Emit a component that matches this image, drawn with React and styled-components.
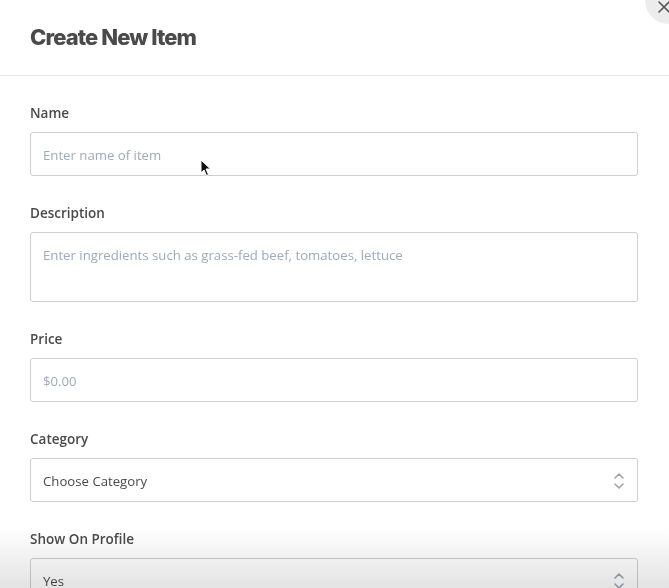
import styled, { createGlobalStyle } from "styled-components";

const Global = createGlobalStyle`
  html, body {
    margin: 0;
    padding: 0;
    background: #fff;
    overflow: hidden;
  }
  * { box-sizing: border-box; }
`;

const Modal = styled.div`
  position: relative;
  width: 669px;
  height: 588px;
  overflow: hidden;
  background: #fff;
  font-family: "Open Sans", "Liberation Sans", sans-serif;
  color: #4a4a4a;
`;

const Header = styled.div`
  height: 76px;
  padding: 0 30px 2px;
  display: flex;
  align-items: center;
  border-bottom: 1px solid #e9e9e9;
`;

const Title = styled.h1`
  margin: 0;
  font-family: Inter, "Liberation Sans", sans-serif;
  font-size: 22px;
  font-weight: 800;
  letter-spacing: -0.9px;
  color: #4a4a4a;
`;

const Close = styled.button`
  position: absolute;
  top: -24px;
  right: -24px;
  width: 48px;
  height: 48px;
  border: none;
  border-radius: 50%;
  background: #ececec;
  padding: 0;
  display: flex;
  align-items: flex-end;
  justify-content: flex-start;
  svg {
    margin: 0 0 11px 13px;
  }
`;

const Form = styled.form`
  padding: 27px 31px 0 30px;
  display: flex;
  flex-direction: column;
`;

const Field = styled.div`
  display: flex;
  flex-direction: column;
  margin-bottom: 27px;
`;

const Label = styled.label`
  font-size: 13.5px;
  font-weight: 600;
  line-height: 20px;
  color: #4a4a4a;
  margin-bottom: 9px;
`;

const inputBase = `
  width: 100%;
  border: 1px solid #cfcfcf;
  border-radius: 3px;
  background: #fff;
  font-family: "Open Sans", "Liberation Sans", sans-serif;
  font-size: 13.2px;
  color: #4a4a4a;
  padding: 0 12px;
  outline: none;
  &::placeholder { color: #9eabbd; }
`;

const Input = styled.input`
  ${inputBase}
  height: 44px;
  padding-top: 1px;
`;

const TextArea = styled.textarea`
  ${inputBase}
  height: 70px;
  padding-top: 13px;
  resize: none;
  line-height: 18px;
`;

const SelectBox = styled.div`
  height: 44px;
  border: 1px solid #cfcfcf;
  border-radius: 3px;
  background: #fff;
  display: flex;
  align-items: center;
  justify-content: space-between;
  padding: 1px 12px 0;
  font-size: 13.2px;
  color: #4a4a4a;
`;

const Fade = styled.div`
  position: absolute;
  left: 0;
  right: 0;
  bottom: 0;
  height: 60px;
  background: linear-gradient(to bottom, #ffffff, #e3e3e3);
  mix-blend-mode: multiply;
  pointer-events: none;
`;

const Cursor = styled.svg`
  position: absolute;
  left: 200px;
  top: 159px;
`;

const Chevrons = () => (
  <svg width="12" height="20" viewBox="0 0 12 20" fill="none" stroke="#9aa3b3" strokeWidth="1.6" strokeLinecap="round" strokeLinejoin="round">
    <path d="M2 7 L6 3 L10 7" />
    <path d="M2 13 L6 17 L10 13" />
  </svg>
);

const Select = ({ value }) => (
  <SelectBox>
    <span>{value}</span>
    <Chevrons />
  </SelectBox>
);

export default function App() {
  return (
    <Modal>
      <Global />
      <Header>
        <Title>Create New Item</Title>
      </Header>
      <Close aria-label="close">
        <svg width="12" height="12" viewBox="0 0 12 12" stroke="#555" strokeWidth="1.6" strokeLinecap="round">
          <path d="M1 1 L11 11 M11 1 L1 11" />
        </svg>
      </Close>
      <Form>
        <Field>
          <Label>Name</Label>
          <Input placeholder="Enter name of item" />
        </Field>
        <Field>
          <Label>Description</Label>
          <TextArea placeholder="Enter ingredients such as grass-fed beef, tomatoes, lettuce" />
        </Field>
        <Field>
          <Label>Price</Label>
          <Input placeholder="$0.00" />
        </Field>
        <Field>
          <Label>Category</Label>
          <Select value="Choose Category" />
        </Field>
        <Field>
          <Label>Show On Profile</Label>
          <Select value="Yes" />
        </Field>
      </Form>
      <Fade />
      <Cursor width="12" height="18" viewBox="0 0 12 18">
        <path d="M1 1 L1 14 L4 11 L6.5 16.5 L8.5 15.5 L6 10 L10.5 10 Z" fill="#111" stroke="#fff" strokeWidth="1" />
      </Cursor>
    </Modal>
  );
}
